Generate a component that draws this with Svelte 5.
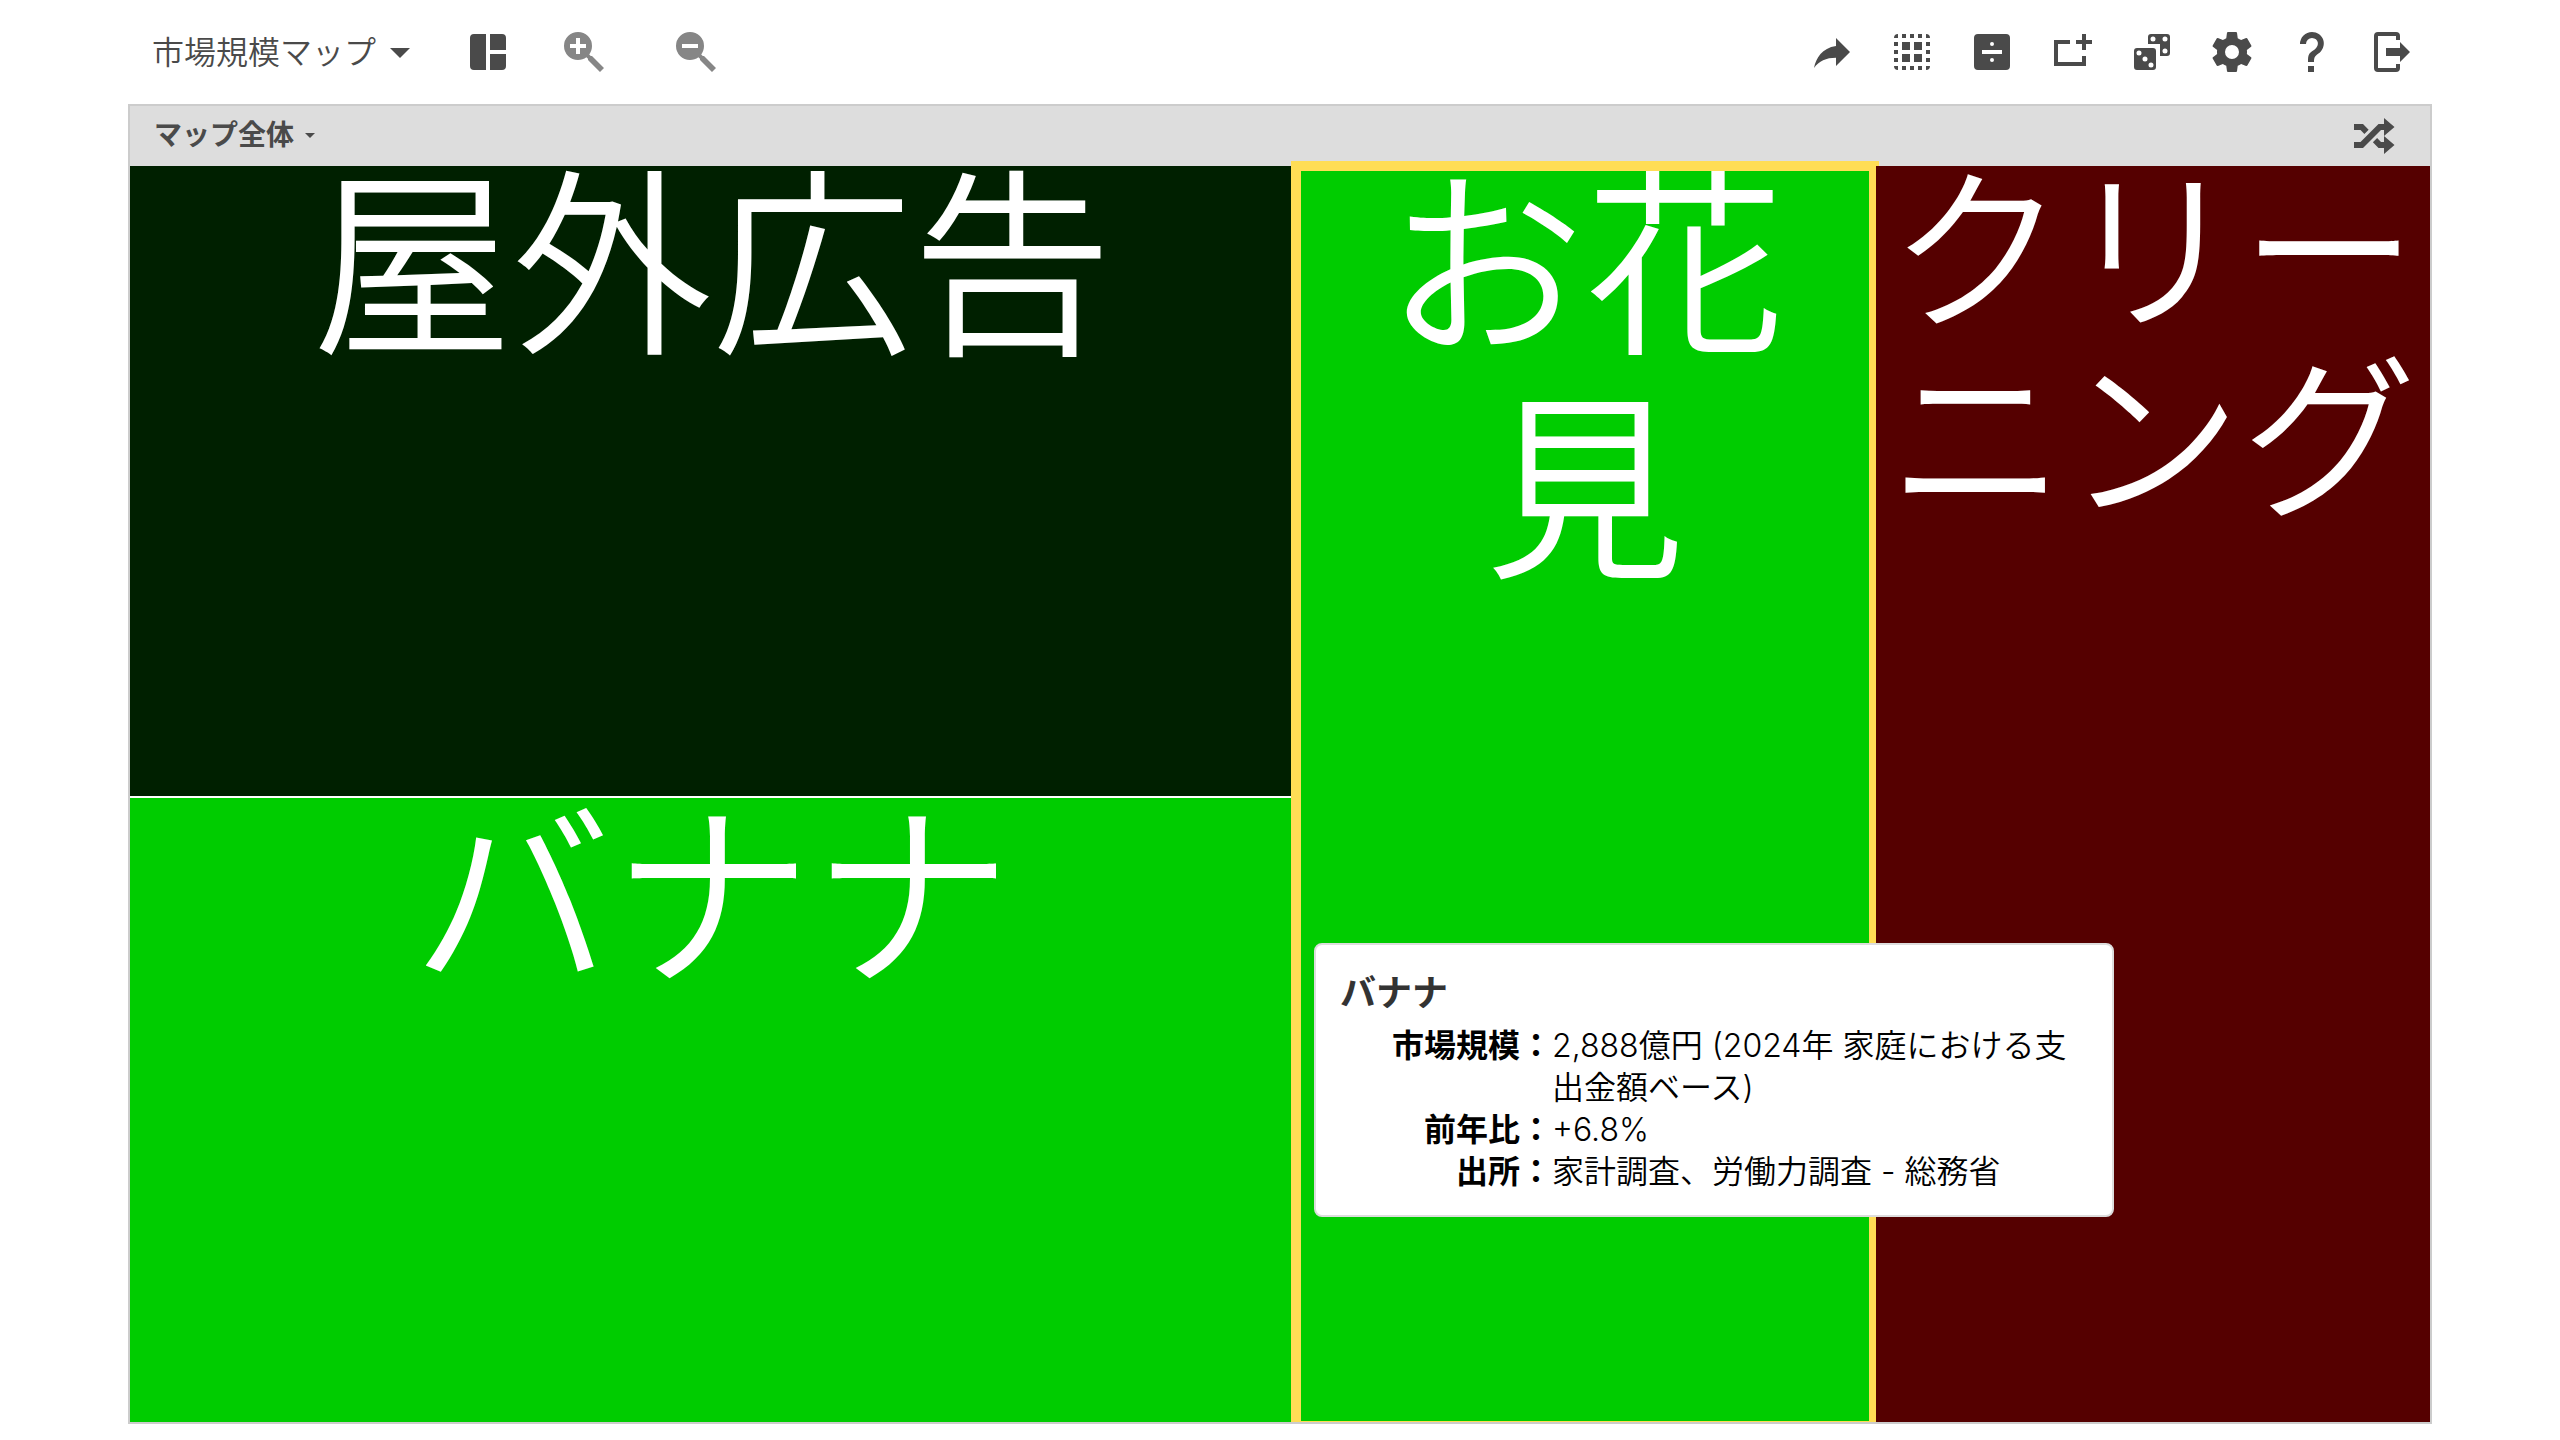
<script lang="ts">
  interface Tool {
    id: string;
    label: string;
    path: string;
  }

  interface Tile {
    id: string;
    name: string;
    tone: string;
    selected?: boolean;
  }

  const viewTools: Tool[] = [
    { id: 'layout', label: 'レイアウト', path: 'M5 3H11V21H5A2 2 0 0 1 3 19V5A2 2 0 0 1 5 3M13 3H19A2 2 0 0 1 21 5V11H13V3M13 13H21V19A2 2 0 0 1 19 21H13V13Z' },
    { id: 'zoom', label: '拡大', path: 'M9,2A7,7 0 0,1 16,9C16,10.57 15.5,12 14.61,13.19L15.41,14H16L22,20L20,22L14,16V15.41L13.19,14.61C12,15.5 10.57,16 9,16A7,7 0 0,1 2,9A7,7 0 0,1 9,2M8,5V8H5V10H8V13H10V10H13V8H10V5H8Z' },
    { id: 'zoom', label: '縮小', path: 'M9,2A7,7 0 0,1 16,9C16,10.57 15.5,12 14.61,13.19L15.41,14H16L22,20L20,22L14,16V15.41L13.19,14.61C12,15.5 10.57,16 9,16A7,7 0 0,1 2,9A7,7 0 0,1 9,2M5,8V10H13V8H5Z' }
  ];

  const mapTools: Tool[] = [
    { id: 'share', label: '共有', path: 'M21,12L14,5V9C7,10 4,15 3,20C5.5,16.5 9,14.9 14,14.9V19L21,12Z' },
    { id: 'select', label: 'すべて選択', path: 'M5 3V5H3A2 2 0 0 1 5 3M7 3H9V5H7ZM11 3H13V5H11ZM15 3H17V5H15ZM19 3A2 2 0 0 1 21 5H19ZM3 7H5V9H3ZM3 11H5V13H3ZM3 15H5V17H3ZM19 7H21V9H19ZM19 11H21V13H19ZM19 15H21V17H19ZM3 19H5V21A2 2 0 0 1 3 19M7 19H9V21H7ZM11 19H13V21H11ZM15 19H17V21H15ZM19 19H21A2 2 0 0 1 19 21ZM7 7H11V11H7ZM13 7H17V11H13ZM7 13H11V17H7ZM13 13H17V17H13Z' },
    { id: 'divide', label: '分割', path: 'M5 3H19A2 2 0 0 1 21 5V19A2 2 0 0 1 19 21H5A2 2 0 0 1 3 19V5A2 2 0 0 1 5 3M7 11V13H17V11ZM12 7A1 1 0 0 0 12 9A1 1 0 0 0 12 7M12 15A1 1 0 0 0 12 17A1 1 0 0 0 12 15' },
    { id: 'add', label: '追加', path: 'M17 3H19V6H22V8H19V11H17V8H14V6H17ZM3 6H11V8H5V17H17V14H19V19H3Z' },
    { id: 'dice', label: 'ランダム', path: 'M4.5 10H12.5A1.5 1.5 0 0 1 14 11.5V19.5A1.5 1.5 0 0 1 12.5 21H4.5A1.5 1.5 0 0 1 3 19.5V11.5A1.5 1.5 0 0 1 4.5 10M5.5 11.25A1.25 1.25 0 0 0 5.5 13.75A1.25 1.25 0 0 0 5.5 11.25M8.5 14.25A1.25 1.25 0 0 0 8.5 16.75A1.25 1.25 0 0 0 8.5 14.25M11.5 17.25A1.25 1.25 0 0 0 11.5 19.75A1.25 1.25 0 0 0 11.5 17.25M11.5 3H19.5A1.5 1.5 0 0 1 21 4.5V12.5A1.5 1.5 0 0 1 19.5 14H16V8H10V4.5A1.5 1.5 0 0 1 11.5 3M12.5 4.25A1.25 1.25 0 0 0 12.5 6.75A1.25 1.25 0 0 0 12.5 4.25M18.5 4.25A1.25 1.25 0 0 0 18.5 6.75A1.25 1.25 0 0 0 18.5 4.25M18.5 10.25A1.25 1.25 0 0 0 18.5 12.75A1.25 1.25 0 0 0 18.5 10.25' },
    { id: 'settings', label: '設定', path: 'M12,15.5A3.5,3.5 0 0,1 8.5,12A3.5,3.5 0 0,1 12,8.5A3.5,3.5 0 0,1 15.5,12A3.5,3.5 0 0,1 12,15.5M19.43,12.97C19.47,12.65 19.5,12.33 19.5,12C19.5,11.67 19.47,11.34 19.43,11L21.54,9.37C21.73,9.22 21.78,8.95 21.66,8.73L19.66,5.27C19.54,5.05 19.27,4.96 19.05,5.05L16.56,6.05C16.04,5.66 15.5,5.32 14.87,5.07L14.5,2.42C14.46,2.18 14.25,2 14,2H10C9.75,2 9.54,2.18 9.5,2.42L9.13,5.07C8.5,5.32 7.96,5.66 7.44,6.05L4.95,5.05C4.73,4.96 4.46,5.05 4.34,5.27L2.34,8.73C2.21,8.95 2.27,9.22 2.46,9.37L4.57,11C4.53,11.34 4.5,11.67 4.5,12C4.5,12.33 4.53,12.65 4.57,12.97L2.46,14.63C2.27,14.78 2.21,15.05 2.34,15.27L4.34,18.73C4.46,18.95 4.73,19.03 4.95,18.95L7.44,17.94C7.96,18.34 8.5,18.68 9.13,18.93L9.5,21.58C9.54,21.82 9.75,22 10,22H14C14.25,22 14.46,21.82 14.5,21.58L14.87,18.93C15.5,18.67 16.04,18.34 16.56,17.94L19.05,18.95C19.27,19.03 19.54,18.95 19.66,18.73L21.66,15.27C21.78,15.05 21.73,14.78 21.54,14.63L19.43,12.97Z' },
    { id: 'help', label: 'ヘルプ', path: 'M10,19H13V22H10V19M12,2C17.35,2.22 19.68,7.62 16.5,11.67C15.67,12.67 14.33,13.33 13.67,14.17C13,15 13,16 13,17H10C10,15.33 10,13.92 10.67,12.92C11.33,11.92 12.67,11.33 13.5,10.67C15.92,8.43 15.32,5.26 12,5A3,3 0 0,0 9,8H6A6,6 0 0,1 12,2Z' },
    { id: 'exit', label: 'ログアウト', path: 'M5 2H14A2 2 0 0 1 16 4V6H14V4H5V20H14V18H16V20A2 2 0 0 1 14 22H5A2 2 0 0 1 3 20V4A2 2 0 0 1 5 2M9 10H16V7L21 12L16 17V14H9Z' }
  ];

  const menuDownPath = 'M7,10L12,15L17,10H7Z';
  const shufflePath =
    'M17,3L22.25,7.5L17,12L22.25,16.5L17,21V18H14.26L11.44,15.18L13.56,13.06L15.5,15H17V12L17,9H15.5L6.5,18H2V15H5.26L14.26,6H17V3M2,6H6.5L9.32,8.82L7.2,10.94L5.26,9H2V6Z';

  let tiles: Tile[] = $state([
    { id: 'outdoor', name: '屋外広告', tone: 'down-slight' },
    { id: 'banana', name: 'バナナ', tone: 'up' },
    { id: 'hanami', name: 'お花見', tone: 'up', selected: true },
    { id: 'cleaning', name: 'クリーニング', tone: 'down' }
  ]);

  const details = [
    { term: '市場規模', value: '2,888億円 (2024年 家庭における支出金額ベース)' },
    { term: '前年比', value: '+6.8%' },
    { term: '出所', value: '家計調査、労働力調査 - 総務省' }
  ];

  function select(id: string) {
    tiles = tiles.map((tile) => ({ ...tile, selected: tile.id === id }));
  }
</script>

{#snippet icon(path: string)}
  <svg class="icon" viewBox="0 0 24 24" aria-hidden="true"><path d={path} /></svg>
{/snippet}

<div class="page">
  <header class="toolbar">
    <div class="toolbar__group">
      <button class="toolbar__title" type="button" aria-haspopup="menu">
        <span class="menu-label">市場規模マップ</span>
        {@render icon(menuDownPath)}
      </button>
      {#each viewTools as tool}
        <button class="tool tool--{tool.id}" type="button" aria-label={tool.label}>
          {@render icon(tool.path)}
        </button>
      {/each}
    </div>
    <div class="toolbar__group">
      {#each mapTools as tool}
        <button class="tool" type="button" aria-label={tool.label}>
          {@render icon(tool.path)}
        </button>
      {/each}
    </div>
  </header>

  <main class="map">
    <div class="map__header">
      <button class="map__crumb" type="button" aria-haspopup="menu">
        <span class="menu-label">マップ全体</span>
        {@render icon(menuDownPath)}
      </button>
      <button class="map__shuffle" type="button" aria-label="シャッフル">
        {@render icon(shufflePath)}
      </button>
    </div>

    <div class="map__tiles">
      {#each tiles as tile (tile.id)}
        <button
          class="tile tile--{tile.id} tile--{tile.tone}"
          class:tile--selected={tile.selected}
          type="button"
          onclick={() => select(tile.id)}
        >
          <span class="tile__name">{tile.name}</span>
        </button>
      {/each}
    </div>

    <div class="tooltip" role="tooltip">
      <h2 class="tooltip__title">バナナ</h2>
      <dl class="tooltip__list">
        {#each details as detail}
          <dt>{detail.term}：</dt>
          <dd>{detail.value}</dd>
        {/each}
      </dl>
    </div>
  </main>
</div>

<style>
  :global(body) {
    margin: 0;
    background: #fff;
  }

  .page {
    display: flex;
    flex-direction: column;
    box-sizing: border-box;
    min-height: 100vh;
    padding: 0 5% 16px;
    color: #4a4a4a;
    font-family: Inter, 'Noto Sans CJK JP', sans-serif;
  }

  button {
    margin: 0;
    padding: 0;
    border: 0;
    background: none;
    color: inherit;
    font: inherit;
    cursor: pointer;
  }

  .icon {
    display: block;
    flex: none;
    width: 48px;
    height: 48px;
    fill: currentColor;
  }

  .menu-label {
    padding-bottom: 4px;
  }

  .toolbar {
    display: flex;
    justify-content: space-between;
    height: 104px;
  }

  .toolbar__group {
    display: flex;
    align-items: stretch;
  }

  .toolbar__title {
    display: flex;
    align-items: center;
    padding: 0 24px;
    font-size: 32px;
    font-weight: 350;
    white-space: nowrap;
  }

  .tool {
    display: flex;
    align-items: center;
    justify-content: center;
    width: 80px;
  }

  .tool--zoom {
    width: 112px;
    color: #868686;
  }

  .map {
    position: relative;
    display: flex;
    flex: 1;
    flex-direction: column;
    overflow: hidden;
    border: 2px solid #ccc;
  }

  .map__header {
    display: flex;
    align-items: center;
    justify-content: space-between;
    height: 60px;
    padding: 0 32px 0 24px;
    background: #ddd;
  }

  .map__crumb {
    display: flex;
    align-items: center;
    gap: 4px;
    padding-bottom: 2px;
    font-size: 28px;
    font-weight: 700;
  }

  .map__crumb .icon {
    width: 24px;
    height: 24px;
  }

  .map__tiles {
    display: grid;
    flex: 1;
    grid-template-columns: 1164fr 578fr 554fr;
    grid-template-rows: 630fr 624fr;
    gap: 2px;
  }

  .tile {
    position: relative;
    display: flex;
    align-items: flex-start;
    justify-content: center;
    color: #fff;
    font-size: 200px;
    font-weight: 350;
    line-height: 224px;
    text-align: center;
  }

  .tile__name {
    margin-top: -12px;
  }

  .tile--outdoor {
    grid-area: 1 / 1;
  }

  .tile--banana {
    grid-area: 2 / 1;
  }

  .tile--hanami {
    grid-area: 1 / 2 / 3 / 3;
    padding: 0 64px;
  }

  .tile--cleaning {
    z-index: 2;
    grid-area: 1 / 3 / 3 / 4;
    font-size: 176px;
    line-height: 188px;
  }

  .tile--cleaning .tile__name {
    margin-top: -8px;
  }

  .tile--down-slight {
    background: #002000;
  }

  .tile--up {
    background: #00cc00;
  }

  .tile--down {
    background: #550000;
  }

  .tile--selected {
    z-index: 1;
  }

  /* highlight ring, its lower edge runs under the map border */
  .tile--selected::after {
    position: absolute;
    inset: -5px -5px -9px;
    border: 10px solid #ffdd55;
    content: '';
    pointer-events: none;
  }

  .tooltip {
    position: absolute;
    z-index: 3;
    top: 837px;
    left: 1184px;
    box-sizing: border-box;
    width: 800px;
    padding: 24px 24px 22px;
    border: 2px solid #ddd;
    border-radius: 8px;
    background: #fff;
    color: #000;
    font-size: 32px;
    line-height: 42px;
  }

  .tooltip__title {
    margin: 0 0 8px;
    color: #333;
    font-size: 36px;
    font-weight: 600;
    line-height: 48px;
  }

  .tooltip__list {
    display: grid;
    grid-template-columns: 212px 1fr;
    margin: 0;
    font-weight: 350;
  }

  .tooltip__list dt {
    font-weight: 700;
    text-align: right;
  }

  .tooltip__list dd {
    margin: 0;
  }
</style>
